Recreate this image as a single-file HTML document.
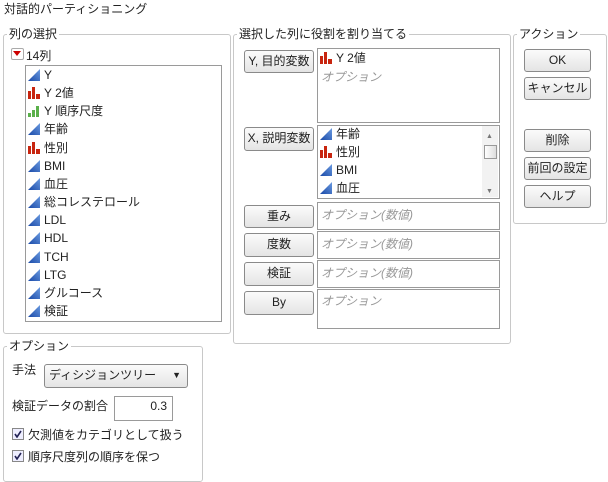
<!DOCTYPE html>
<html><head><meta charset="utf-8"><style>
body{margin:0;width:608px;height:482px;background:#fff;font-family:"Liberation Sans","Noto Sans CJK JP",sans-serif;font-size:12px;color:#222;position:relative;overflow:hidden}
.a{position:absolute;white-space:nowrap;line-height:14px}
.g{position:absolute;border:1px solid #c8c8c8;border-radius:3px}
.lg{position:absolute;background:#fff;padding:0 2px;line-height:14px;white-space:nowrap}
.box{position:absolute;border:1px solid #9a9a9a;background:#fff}
.btn{position:absolute;border:1px solid #8a8a8a;border-radius:3px;background:linear-gradient(#fbfbfb,#e4e4e4);text-align:center;line-height:21px;font-size:12px}
.op{color:#999;font-style:italic}
.cb{display:inline-block;width:10px;height:10px;border:1px solid #888;background:#eef;vertical-align:-1px;margin-right:4px;position:relative}
</style></head><body>
<div class="a" style="left:4px;top:2px">対話的パーティショニング</div>

<div class="g" style="left:3px;top:34px;width:226px;height:298px"></div>
<div class="lg" style="left:7px;top:27px">列の選択</div>
<div class="a" style="left:11px;top:48px;width:11px;height:10px;border:1px solid #aaa;border-radius:2px;background:#fff"></div>
<svg class="a" style="left:13px;top:51px" width="9" height="6"><path d="M0 0H8L4 5Z" fill="#c00"/></svg>
<div class="a" style="left:26px;top:49px">14列</div>
<div class="box" style="left:25px;top:65px;width:195px;height:255px"></div>

<div class="g" style="left:233px;top:34px;width:276px;height:308px"></div>
<div class="lg" style="left:237px;top:27px">選択した列に役割を割り当てる</div>
<div class="btn" style="left:244px;top:50px;width:68px;height:21px">Y, 目的変数</div>
<div class="box" style="left:317px;top:48px;width:181px;height:73px"></div>
<div class="btn" style="left:244px;top:127px;width:68px;height:22px">X, 説明変数</div>
<div class="box" style="left:317px;top:125px;width:181px;height:72px"></div>
<div class="a" style="left:482px;top:126px;width:16px;height:71px;background:#f2f2f2"></div>
<div class="a" style="left:484px;top:145px;width:11px;height:12px;border:1px solid #999;background:linear-gradient(90deg,#fff,#ddd)"></div>
<div class="a" style="left:486px;top:130px;font-size:7px;color:#777">▲</div>
<div class="a" style="left:486px;top:185px;font-size:7px;color:#777">▼</div>
<div class="btn" style="left:244px;top:205px;width:68px;height:21px">重み</div>
<div class="box" style="left:317px;top:202px;width:181px;height:26px"></div>
<div class="btn" style="left:244px;top:233px;width:68px;height:22px">度数</div>
<div class="box" style="left:317px;top:231px;width:181px;height:26px"></div>
<div class="btn" style="left:244px;top:262px;width:68px;height:22px">検証</div>
<div class="box" style="left:317px;top:260px;width:181px;height:26px"></div>
<div class="btn" style="left:244px;top:291px;width:68px;height:22px">By</div>
<div class="box" style="left:317px;top:289px;width:181px;height:38px"></div>
<div class="a op" style="left:321px;top:208px">オプション(数値)</div>
<div class="a op" style="left:321px;top:237px">オプション(数値)</div>
<div class="a op" style="left:321px;top:266px">オプション(数値)</div>
<div class="a op" style="left:321px;top:294px">オプション</div>
<div class="a op" style="left:321px;top:70px">オプション</div>

<div class="g" style="left:513px;top:34px;width:92px;height:188px"></div>
<div class="lg" style="left:517px;top:27px">アクション</div>
<div class="btn" style="left:524px;top:49px;width:65px;height:21px">OK</div>
<div class="btn" style="left:524px;top:77px;width:65px;height:21px">キャンセル</div>
<div class="btn" style="left:524px;top:129px;width:65px;height:21px">削除</div>
<div class="btn" style="left:524px;top:157px;width:65px;height:21px">前回の設定</div>
<div class="btn" style="left:524px;top:185px;width:65px;height:21px">ヘルプ</div>

<div class="g" style="left:3px;top:346px;width:198px;height:134px"></div>
<div class="lg" style="left:7px;top:339px">オプション</div>
<div class="a" style="left:12px;top:363px">手法</div>
<div class="btn" style="left:44px;top:364px;width:142px;height:22px;text-align:left"><span style="margin-left:4px">ディシジョンツリー</span><span style="position:absolute;right:6px;font-size:9px">▼</span></div>
<div class="a" style="left:12px;top:399px">検証データの割合</div>
<div class="box" style="left:114px;top:396px;width:57px;height:23px;text-align:right;line-height:18px"><span style="padding-right:5px">0.3</span></div>
<div class="a" style="left:12px;top:428px"><span class="cb"><svg style="position:absolute;left:1px;top:1px" width="8" height="8"><path d="M1 4L3 7L7 1" stroke="#225" stroke-width="1.6" fill="none"/></svg></span>欠測値をカテゴリとして扱う</div>
<div class="a" style="left:12px;top:450px"><span class="cb"><svg style="position:absolute;left:1px;top:1px" width="8" height="8"><path d="M1 4L3 7L7 1" stroke="#225" stroke-width="1.6" fill="none"/></svg></span>順序尺度列の順序を保つ</div>

<svg width="0" height="0" style="position:absolute"><defs>
<linearGradient id="bl" x1="0" y1="1" x2="1" y2="0"><stop offset="0" stop-color="#1a4aa8"/><stop offset="1" stop-color="#6a9ae0"/></linearGradient></defs></svg>

<div id="L"></div>
<script>
var T='<svg width="12" height="12"><path d="M0 12L12 0V12Z" fill="url(#bl)"/></svg>';
var R='<svg width="12" height="12"><rect x="0" y="4" width="3" height="8" fill="#c8250f"/><rect x="4" y="0" width="3" height="12" fill="#c8250f"/><rect x="8" y="7" width="4" height="5" fill="#c8250f"/></svg>';
var G='<svg width="12" height="12"><rect x="0" y="8" width="3" height="4" fill="#5ab04a"/><rect x="4" y="5" width="3" height="7" fill="#5ab04a"/><rect x="8" y="1" width="3" height="11" fill="#5ab04a"/></svg>';
function item(x,y,ic,t){return '<div class="a" style="left:'+x+'px;top:'+y+'px;height:16px"><span style="position:absolute;left:0;top:1px">'+ic+'</span><span style="position:absolute;left:16px;top:0">'+t+'</span></div>';}
var h='',list=[[T,'Y'],[R,'Y 2値'],[G,'Y 順序尺度'],[T,'年齢'],[R,'性別'],[T,'BMI'],[T,'血圧'],[T,'総コレステロール'],[T,'LDL'],[T,'HDL'],[T,'TCH'],[T,'LTG'],[T,'グルコース'],[T,'検証']];
for(var i=0;i<list.length;i++)h+=item(28,68+i*18.15,list[i][0],list[i][1]);
h+=item(320,51,R,'Y 2値');
var x=[[T,'年齢'],[R,'性別'],[T,'BMI'],[T,'血圧']];
for(i=0;i<4;i++)h+=item(320,127+i*18,x[i][0],x[i][1]);
document.getElementById('L').innerHTML=h;
</script>
</body></html>
